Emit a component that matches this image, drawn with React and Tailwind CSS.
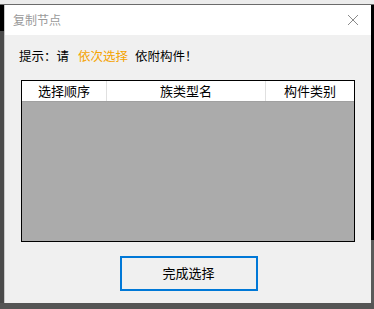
const font = { fontFamily: '"Noto Sans CJK SC", "Noto Sans", sans-serif' };

export default function App() {
  return (
    <div className="w-[374px] h-[309px] flex flex-col bg-[#555555] overflow-hidden" style={font}>
      {/* desktop strip above the dialog */}
      <div className="h-[5px] bg-[#ececec] border-b border-[#6b6b6b]" />

      <div className="flex flex-1">
        <div className="w-[4px] flex flex-col">
          <div className="h-[26px] bg-black" />
          <div className="flex-1 bg-[#4a4a4a]" />
        </div>

        {/* dialog */}
        <div className="w-[367px] flex flex-col bg-[#f0f0f0] border-l border-[#c8c8c8]">
          <div className="h-[30px] bg-white flex items-center justify-between pl-[8px] pr-[12px]">
            <span className="text-[12px] text-[#9a9a9a]">复制节点</span>
            <svg width="12" height="12" viewBox="0 0 12 12" className="text-[#8a8a8a]">
              <path d="M1 1L11 11M11 1L1 11" stroke="currentColor" strokeWidth="1" fill="none" />
            </svg>
          </div>

          <div className="flex flex-col px-[16px] pt-[13px]">
            <div className="flex items-center h-[16px] text-[12.5px] text-black leading-none -ml-[2px]">
              <span>提示：请</span>
              <span className="ml-[9px] text-[#f5a300]">依次选择</span>
              <span className="ml-[7px]">依附构件！</span>
            </div>

            <div className="mt-[16px] h-[162px] border border-black bg-[#ababab] flex flex-col">
              <div className="h-[21px] bg-white border-b border-[#a0a0a0] flex text-[13px] text-black">
                <div className="w-[85px] flex items-center justify-center border-r border-[#e0e0e0]">选择顺序</div>
                <div className="w-[159px] flex items-center justify-center border-r border-[#e0e0e0]">族类型名</div>
                <div className="flex-1 flex items-center justify-center">构件类别</div>
              </div>
            </div>

            <div className="mt-[14px] flex justify-center">
              <button className="w-[138px] h-[35px] border-2 border-[#0078d7] bg-[#f0f0f0] text-[13px] text-black ml-[1px] pb-[2px]">
                完成选择
              </button>
            </div>
          </div>
        </div>

        <div className="flex-1 flex flex-col">
          <div className="h-[235px] bg-black" />
          <div className="flex-1 bg-[#5a5a5a]" />
        </div>
      </div>

      <div className="h-[6px] bg-[#555555]" />
    </div>
  );
}
